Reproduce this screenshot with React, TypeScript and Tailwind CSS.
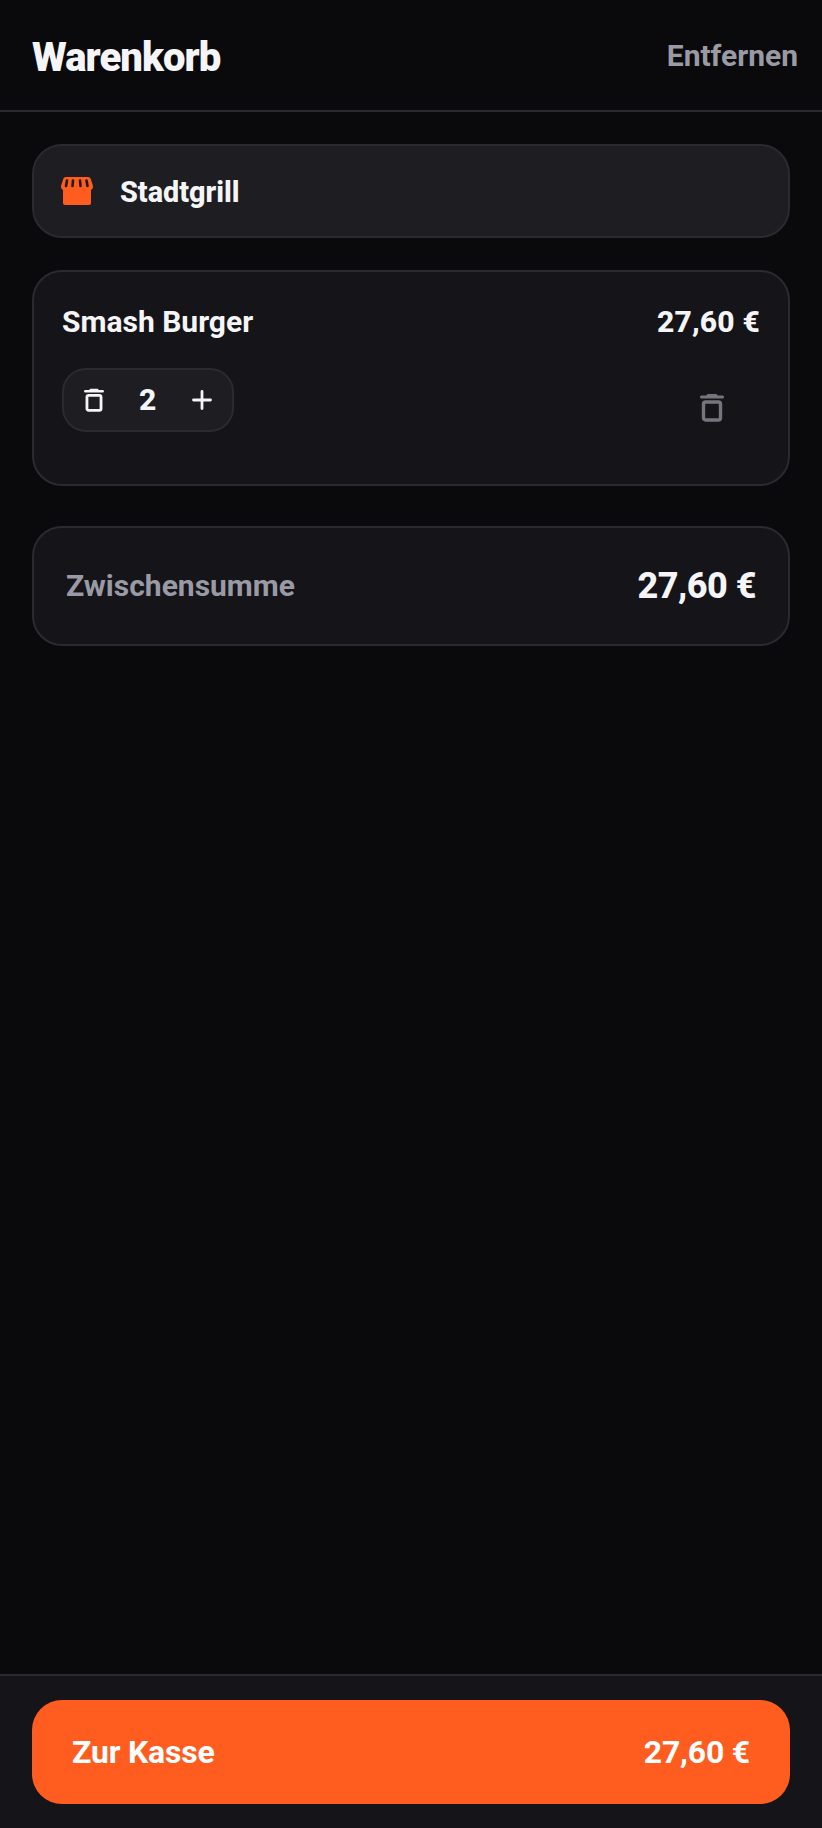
function TrashIcon({ className }: { className: string }) {
	return (
		<svg viewBox="0 0 24 29" className={className} fill="none" stroke="currentColor">
			<path d="M1.500 4h21" strokeWidth="3" strokeLinecap="round" />
			<path d="M8 2.500h8" strokeWidth="3" strokeLinecap="round" />
			<rect x="3.500" y="9" width="17" height="18" rx="2" strokeWidth="3.400" />
		</svg>
	);
}

function StoreIcon() {
	return (
		<svg viewBox="0 0 32 28" className="h-[28px] w-[32px] text-[#ff5c20]" fill="currentColor">
			<path d="M5 0h22c1.400 0 2.300.7 2.800 2L32 9c.3 1.800-.6 3.400-2 4v13c0 1.100-.9 2-2 2H4c-1.100 0-2-.9-2-2V13C.6 12.400-.3 10.800 0 9l2.200-7C2.700.7 3.600 0 5 0z" />
			<path d="M6 3.500 5 9M12 3.500 11.500 9M19 3.500 19.500 9M25.500 3.500 26.500 9" stroke="#1d1d22" strokeWidth="2.600" strokeLinecap="round" fill="none" />
		</svg>
	);
}

export default function App() {
	return (
		<div className="flex h-[1828px] w-full flex-col bg-[#0a0a0c] font-['Roboto',sans-serif] text-[#f5f5f7]">
			<header className="flex h-[112px] shrink-0 items-start justify-between border-b-2 border-[#2a2a31] pl-[32px] pr-[24px]">
				<h1 className="mt-[34px] text-[40px] leading-[48px] font-black tracking-[-0.9px]">Warenkorb</h1>
				<button className="mt-[37px] text-[30px] leading-[38px] font-bold text-[#9a9aa5]">Entfernen</button>
			</header>

			<main className="flex flex-1 flex-col px-[32px] pt-[32px]">
				<div className="flex h-[94px] items-center rounded-[30px] border-2 border-[#2a2a31] bg-[#1d1d22] pl-[27px]">
					<StoreIcon />
					<span className="ml-[27px] mt-[2px] text-[28.800px] leading-[36px] font-extrabold">Stadtgrill</span>
				</div>

				<div className="mt-[32px] h-[216px] rounded-[30px] border-2 border-[#2a2a31] bg-[#141419] px-[28px] pt-[32px]">
					<div className="flex items-start justify-between">
						<span className="text-[30px] leading-[36px] font-bold">Smash Burger</span>
						<span className="text-[30px] leading-[36px] font-extrabold tracking-[0.2px]">27,60 €</span>
					</div>
					<div className="mt-[28px] flex items-center justify-between">
						<div className="flex h-[64px] w-[172px] items-center rounded-[24px] border-2 border-[#2a2a31] bg-[#1d1d22] pl-[20px]">
							<TrashIcon className="h-[24px] w-[20px]" />
							<span className="ml-[35px] text-[30px] leading-[36px] font-extrabold">2</span>
							<span className="ml-[36px] flex h-[20px] w-[20px] items-center justify-center">
								<svg viewBox="0 0 20 20" className="h-[20px] w-[20px]" stroke="currentColor" strokeWidth="2.800" strokeLinecap="round">
									<path d="M10 1.500v17M1.500 10h17" />
								</svg>
							</span>
						</div>
						<div className="mr-[36px] mt-[14px] text-[#75757d]">
							<TrashIcon className="h-[29px] w-[24px]" />
						</div>
					</div>
				</div>

				<div className="mt-[40px] flex h-[120px] items-center justify-between rounded-[30px] border-2 border-[#2a2a31] bg-[#141419] pl-[32px] pr-[32px]">
					<span className="text-[30px] leading-[36px] font-bold text-[#9a9aa5]">Zwischensumme</span>
					<span className="text-[36px] leading-[44px] font-extrabold tracking-[-0.5px]">27,60 €</span>
				</div>
			</main>

			<footer className="h-[154px] shrink-0 border-t-2 border-[#2a2a31] bg-[#141419] px-[32px] pt-[24px]">
				<button className="flex h-[104px] w-full items-center justify-between rounded-[30px] bg-[#ff5c20] px-[40px] text-white">
					<span className="text-[32px] leading-[38px] font-bold tracking-[-0.2px]">Zur Kasse</span>
					<span className="text-[32px] leading-[38px] font-bold tracking-[-0.2px]">27,60 €</span>
				</button>
			</footer>
		</div>
	);
}
